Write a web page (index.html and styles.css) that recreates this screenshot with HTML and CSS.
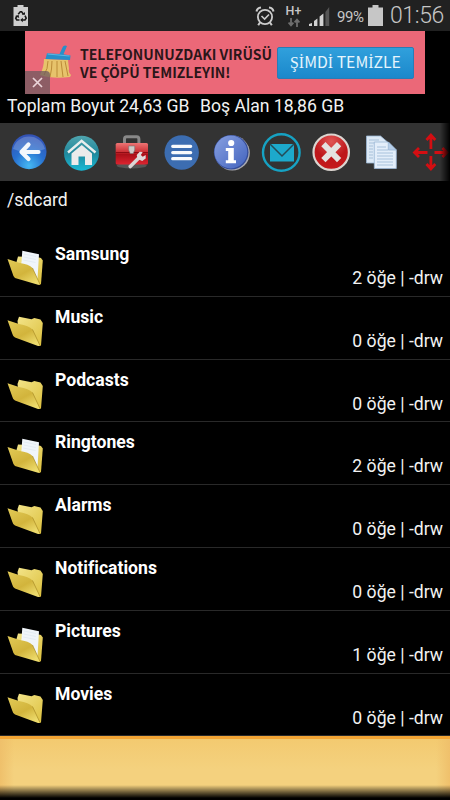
FILE: index.html
```html
<!DOCTYPE html>
<html lang="tr">
<head>
  <meta charset="UTF-8">
  <meta name="viewport" content="width=device-width, initial-scale=1.0">
  <title>/sdcard</title>
  <link rel="stylesheet" href="styles.css">
</head>
<body>
  <!-- shared folder icons -->
  <svg class="defs" width="0" height="0">
    <defs>
      <linearGradient id="gFront" x1="0" y1="0" x2="0.7" y2="1">
        <stop offset="0" stop-color="#e2cb57"/>
        <stop offset="0.6" stop-color="#d2b43c"/>
        <stop offset="1" stop-color="#eddb6c"/>
      </linearGradient>
      <linearGradient id="gBack" x1="0" y1="0" x2="1" y2="1">
        <stop offset="0" stop-color="#f3e489"/>
        <stop offset="1" stop-color="#dcc03e"/>
      </linearGradient>
      <symbol id="folder" viewBox="0 0 40 40">
        <path d="M12.5 10 L14 5.8 L26.5 8.3 L29.3 7 L35.5 8.6 L37.8 12 L36 34.5 L34 35 L14 22Z" fill="url(#gBack)"/>
        <path d="M2.5 9.2 L14 13 Q24 14.5 27.5 18.5 L35.2 35 L33 35 L10 26.5 Q8 25.5 7.4 23Z" fill="url(#gFront)"/>
        <path d="M27.5 18.5 L35.2 35" stroke="#a98b24" stroke-width="0.7" fill="none"/>
      </symbol>
      <symbol id="folder-full" viewBox="0 0 40 40">
        <path d="M11.5 14 L13 8.5 L34 9.5 L36 10 L37.8 12.5 L36 36 L34 36.7 L14 24Z" fill="url(#gBack)"/>
        <path d="M17.3 2.8 L34 6.2 L32.5 31 L14 23 L16.5 14Z" fill="#f0f5fa"/>
        <path d="M19 6 L31 8.5 M18.6 9 L30.8 11.5 M18.3 12 L30.5 14.5" stroke="#dae5ef" stroke-width="0.6"/>
        <path d="M2.5 11 L14 14.8 Q24 16.3 27.5 20 L35.2 36.8 L33 36.8 L10 30 Q8 28 7.4 25Z" fill="url(#gFront)"/>
        <path d="M27.5 20 L35.2 36.8" stroke="#a98b24" stroke-width="0.7" fill="none"/>
      </symbol>
    </defs>
  </svg>

  <div class="screen">
    <header class="statusbar">
      <svg class="recycle" width="16" height="22" viewBox="0 0 16 22">
        <path d="M4.5 0h6v2H15v19H.5V2h4z" fill="#cfcfcf"/>
        <path d="M5.2 9.2 L7.3 6.8 H8.6 L10.5 9.2 M12 10.7 L13.2 13.2 L12 15 H9.2 M6.5 15 H3.8 L2.7 13.2 L4 11" fill="none" stroke="#181818" stroke-width="1.6"/>
        <path d="M8.8 9.7h3.2V6.9zM9.8 12.8v4.4L7.2 15zM2 11l3.6-1 .6 3z" fill="#181818"/>
      </svg>
      <span class="spacer"></span>
      <svg class="alarm" width="20" height="22" viewBox="0 0 20 22" fill="none" stroke="#ccc">
        <circle cx="10" cy="12" r="7.1" stroke-width="1.8"/>
        <path d="M6.5 11 L9.6 14 L14 9.5" stroke-width="1.6"/>
        <path d="M1.5 6.5 Q2 3 6 2.5 M18.5 6.5 Q18 3 14 2.5 M5 17.5 L3.2 20.3 M15 17.5 L16.8 20.3" stroke-width="2"/>
      </svg>
      <div class="network">
        <span>H+</span>
        <svg width="12" height="9" viewBox="0 0 12 9" fill="none" stroke="#6e6e6e" stroke-width="1.8">
          <path d="M3 0v7M.6 4.6L3 7.4l2.4-2.8M9 9V2M6.6 4.4L9 1.6l2.4 2.8"/>
        </svg>
      </div>
      <svg class="signal" width="21" height="20" viewBox="0 0 21 20">
        <path d="M0 20v-2l3-1v3zM5 20v-5l3.4-2.5V20zM10.6 20V10.5L14.4 7.5V20z" fill="#d2d2d2"/>
        <path d="M16.4 6L20.2 1v19h-3.8z" fill="#555"/>
      </svg>
      <span class="percent">99%</span>
      <svg class="battery" width="15" height="21" viewBox="0 0 15 21">
        <path d="M4.5 0h6v2.5H15V21H0V2.5h4.5z" fill="#c6c6c6"/>
      </svg>
      <span class="clock">01:56</span>
    </header>

    <section class="ad">
      <svg class="broom" width="34" height="36" viewBox="0 0 34 36">
        <path d="M5 14 Q5 22 1 30 Q13 34 31 32 L32 30 Q29 27 30 24 L29 15Z" fill="#e7c36b"/>
        <path d="M9 16 Q9 24 5 30 M13 16 Q13 24 11 32 M18 16 L18 32 M22 16 L24 32 M26 16 L29 31" stroke="#bb8b38" stroke-width="1" fill="none"/>
        <path d="M20.5 9 L24 1.5 Q26 -.4 28 1 L24.5 9.3 L31.5 10.5 L31 15 L6.5 14 L8 8.3Z" fill="#278fc9"/>
        <path d="M8.5 9 L30.5 11" stroke="#5bb8e4" stroke-width="1"/>
      </svg>
      <p class="ad-text">TELEFONUNUZDAKI VIRÜSÜ<br>VE ÇÖPÜ TEMIZLEYIN!</p>
      <button class="ad-button" type="button"><span class="serif">Şİ</span>MD<span class="serif">İ</span> TEM<span class="serif">İ</span>ZLE</button>
      <span class="ad-close">
        <svg width="11" height="11" viewBox="0 0 11 11"><path d="M1 1l9 9M10 1l-9 9" stroke="#ecd5d9" stroke-width="1.7"/></svg>
      </span>
    </section>

    <div class="storage">
      <span class="total">Toplam Boyut 24,63 GB</span>
      <span class="free">Boş Alan 18,86 GB</span>
    </div>

    <nav class="toolbar">
      <svg viewBox="0 0 50 50">
        <defs>
          <radialGradient id="gBlue" cx="0.5" cy="0.9" r="0.9">
            <stop offset="0" stop-color="#45b9f3"/>
            <stop offset="0.5" stop-color="#2870d0"/>
            <stop offset="1" stop-color="#3450b2"/>
          </radialGradient>
        </defs>
        <circle cx="25" cy="24.7" r="17.5" fill="url(#gBlue)"/>
        <path d="M9 22 A16.5 16.5 0 0 1 41 22 Q25 29 9 22Z" fill="#fff" opacity="0.2"/>
        <path d="M24.5 17.5 L17.5 25 L24.5 32 M18 25 H34.5" fill="none" stroke="#f4f7fc" stroke-width="4.2" stroke-linecap="round" stroke-linejoin="round"/>
      </svg>
      <svg viewBox="0 0 50 50">
        <defs>
          <linearGradient id="gTeal" x1="0" y1="0" x2="0" y2="1">
            <stop offset="0" stop-color="#4fa4ae"/>
            <stop offset="0.5" stop-color="#20889c"/>
            <stop offset="1" stop-color="#18b9d5"/>
          </linearGradient>
        </defs>
        <circle cx="27.5" cy="26.2" r="17.5" fill="url(#gTeal)"/>
        <path d="M27.8 18 L38 26.5 V38 H31 V29.5 H24.5 V38 H17.5 V26.5Z" fill="#ebebeb"/>
        <path d="M14 25.5 L27.6 13.8 L41.5 25.5" fill="none" stroke="#e8eeee" stroke-width="2.4"/>
      </svg>
      <svg viewBox="0 0 50 50">
        <defs>
          <linearGradient id="gBox" x1="0" y1="0" x2="0" y2="1">
            <stop offset="0" stop-color="#ed7474"/>
            <stop offset="0.45" stop-color="#c92b30"/>
            <stop offset="0.52" stop-color="#a90f18"/>
            <stop offset="1" stop-color="#dc2430"/>
          </linearGradient>
        </defs>
        <g transform="translate(2.7 0)">
          <ellipse cx="25" cy="38.5" rx="15" ry="3" fill="#555"/>
          <path d="M17.8 16 V12 Q17.8 9.7 20 9.7 H30 Q32.2 9.7 32.2 12 V16" fill="none" stroke="#888" stroke-width="3"/>
          <rect x="9" y="16" width="32.3" height="21.5" rx="1.5" fill="url(#gBox)"/>
          <path d="M9 25.5h32.3" stroke="#8d0c14"/>
          <path d="M22 19h6v4l-1.5 3.5h-3L22 23z" fill="#cfcac8" stroke="#777" stroke-width=".6"/>
          <path d="M23.5 39.5 L32 31" stroke="#dad5d5" stroke-width="3.6" stroke-linecap="round"/>
          <path d="M31 32 L30 28 L33 24.8 L36 25 L34.2 28 L36 29.8 L39 28 L39 31.5 L35.5 34Z" fill="#dedada"/>
        </g>
      </svg>
      <svg viewBox="0 0 50 50">
        <circle cx="27.7" cy="25.5" r="17.2" fill="#3c6db1"/>
        <path d="M18.7 19.3h18M18.7 25.6h18M18.7 31.7h18" stroke="#f8fafc" stroke-width="3.2" stroke-linecap="round"/>
      </svg>
      <svg viewBox="0 0 50 50">
        <defs>
          <linearGradient id="gInfo" x1="0" y1="0" x2="1" y2="1">
            <stop offset="0" stop-color="#88a0e1"/>
            <stop offset="1" stop-color="#4263be"/>
          </linearGradient>
        </defs>
        <circle cx="28.3" cy="26" r="17.5" fill="#a9a9af"/>
        <circle cx="27.2" cy="25.2" r="17.3" fill="#344c98"/>
        <circle cx="26.8" cy="25" r="16.4" fill="url(#gInfo)"/>
        <circle cx="27.2" cy="16" r="3.1" fill="#fff"/>
        <path d="M21.8 21h8v12.3H32v3H21.8v-3h2.4V24h-2.4z" fill="#fff"/>
      </svg>
      <svg viewBox="0 0 50 50">
        <circle cx="27.3" cy="25.5" r="18.3" fill="none" stroke="#16a2c3" stroke-width="2.4"/>
        <rect x="16" y="17" width="24" height="17.5" fill="#1da9cc"/>
        <path d="M16 17 L28 29 L40 17" fill="none" stroke="#244b57" stroke-width="1.5"/>
      </svg>
      <svg viewBox="0 0 50 50">
        <defs>
          <radialGradient id="gRed" cx="0.5" cy="0.2" r="0.8">
            <stop offset="0" stop-color="#e05554"/>
            <stop offset="0.6" stop-color="#bd171a"/>
            <stop offset="1" stop-color="#c71a1c"/>
          </radialGradient>
        </defs>
        <circle cx="27.2" cy="25.2" r="17.7" fill="url(#gRed)" stroke="#dbd5d0" stroke-width="2.2"/>
        <path d="M21.5 19.3 L33 31 M33 19.3 L21.5 31" stroke="#e4e2e0" stroke-width="6" stroke-linecap="square" stroke-linejoin="round"/>
      </svg>
      <svg viewBox="0 0 50 50">
        <g stroke="#9bb6d4" stroke-width="0.8">
          <path d="M12.5 9h14l7 6v21h-21z" fill="#dce9f6"/>
          <path d="M20.3 15h14l8 8v18.5h-22z" fill="#e3eefa"/>
          <path d="M15 13h10M15 16h5M15 19h4M15 22h4M15 25h4M15 28h4M15 31h4M23 20h9M23 23h11M23 26h16M23 29h16M23 32h16M23 35h16M23 38h16"/>
          <path d="M34.3 15v8h8z" fill="#b6cee9"/>
        </g>
      </svg>
      <svg viewBox="0 0 50 50">
        <path d="M26.9 22v-12M22.5 13l4.4-5 4.4 5M26.9 29v13M22.5 37l4.4 5 4.4-5M23.5 25.5H10.5M15 21l-4.5 4.5L15 30M30.5 25.5H43M38.5 21l4.5 4.5-4.5 4.5" fill="none" stroke="#d40e12" stroke-width="2.8"/>
      </svg>
    </nav>

    <div class="path">/sdcard</div>

    <ul class="files">
      <li><svg class="icon"><use href="#folder-full"/></svg><span class="name">Samsung</span><span class="meta">2 öğe | -drw</span></li>
      <li><svg class="icon"><use href="#folder"/></svg><span class="name">Music</span><span class="meta">0 öğe | -drw</span></li>
      <li><svg class="icon"><use href="#folder"/></svg><span class="name">Podcasts</span><span class="meta">0 öğe | -drw</span></li>
      <li><svg class="icon"><use href="#folder-full"/></svg><span class="name">Ringtones</span><span class="meta">2 öğe | -drw</span></li>
      <li><svg class="icon"><use href="#folder"/></svg><span class="name">Alarms</span><span class="meta">0 öğe | -drw</span></li>
      <li><svg class="icon"><use href="#folder"/></svg><span class="name">Notifications</span><span class="meta">0 öğe | -drw</span></li>
      <li><svg class="icon"><use href="#folder-full"/></svg><span class="name">Pictures</span><span class="meta">1 öğe | -drw</span></li>
      <li><svg class="icon"><use href="#folder"/></svg><span class="name">Movies</span><span class="meta">0 öğe | -drw</span></li>
    </ul>

    <div class="selected"></div>
  </div>
</body>
</html>
```

FILE: styles.css
```css
* {
  box-sizing: border-box;
}

body {
  margin: 0;
  background: #000;
  color: #f2f2f2;
  font-family: Roboto, "Noto Sans", sans-serif;
}

.defs {
  position: absolute;
}

.screen {
  width: 450px;
  height: 800px;
  overflow: hidden;
  display: flex;
  flex-direction: column;
}

/* status bar */
.statusbar {
  flex: none;
  height: 31px;
  padding: 0 7px 0 13px;
  display: flex;
  align-items: center;
  background: #212121;
  color: #c6c6c6;
}

.spacer {
  flex: 1;
}

.alarm {
  margin-right: 10px;
}

.network {
  width: 17px;
  margin-right: 7px;
  display: flex;
  flex-direction: column;
  align-items: center;
  font-size: 12.5px;
  font-weight: 500;
  line-height: 11px;
}

.network svg {
  margin-top: 2px;
}

.signal {
  margin: 1px 7px 0 0;
}

.percent {
  width: 28px;
  margin: 2px 3px 0 0;
  font-size: 15px;
  letter-spacing: -0.4px;
  white-space: nowrap;
}

.battery {
  margin-right: 7px;
}

.clock {
  width: 53px;
  font-size: 23px;
  font-weight: 300;
  line-height: 31px;
  letter-spacing: -0.4px;
  white-space: nowrap;
}

/* banner */
.ad {
  position: relative;
  flex: none;
  width: 400px;
  height: 63px;
  margin: 0 25px;
  padding-left: 14px;
  display: flex;
  align-items: center;
  background: #eb6878;
}

.ad-text {
  width: 197px;
  margin: 0 0 0 7px;
  color: #2b1619;
  font-family: "Noto Sans CJK SC", "Noto Sans", sans-serif;
  font-size: 14px;
  font-weight: 700;
  line-height: 18px;
  white-space: nowrap;
}

.ad-button {
  width: 137px;
  height: 32px;
  padding: 0;
  border: 1px solid #2a7cb5;
  border-radius: 2px;
  background: linear-gradient(#30a0dc, #1b88cb);
  color: #e5f5fd;
  font-family: "Noto Sans CJK SC", "Noto Sans", sans-serif;
  font-size: 15.8px;
  line-height: 28px;
  white-space: nowrap;
}

.serif {
  font-family: "Liberation Serif", serif;
}

.ad-close {
  position: absolute;
  left: 0;
  bottom: 0;
  width: 25px;
  height: 23px;
  display: flex;
  align-items: center;
  justify-content: center;
  border-top-right-radius: 4px;
  background: rgba(110, 90, 95, 0.75);
}

.storage {
  flex: none;
  height: 29px;
  padding: 0 0 6px 7px;
  display: flex;
  align-items: center;
  font-size: 17.6px;
  white-space: pre;
}

.total {
  width: 193px;
}

/* toolbar */
.toolbar {
  flex: none;
  height: 58px;
  padding: 4px 0 0 4px;
  display: flex;
  overflow: hidden;
  background: #333;
  -webkit-mask-image: linear-gradient(90deg, #000 440px, transparent 450px);
  mask-image: linear-gradient(90deg, #000 440px, transparent 450px);
}

.toolbar svg {
  flex: none;
  width: 50px;
  height: 50px;
}

.path {
  flex: none;
  height: 53px;
  padding: 9px 7px 0;
  font-size: 17.6px;
  line-height: 21px;
}

/* file list */
.files {
  flex: none;
  margin: 0;
  padding: 0;
  list-style: none;
}

.files li {
  height: 62.8px;
  padding: 0 7px 0 5px;
  display: grid;
  grid-template-columns: 50px 1fr;
  grid-template-rows: 32px 30px;
  border-bottom: 1px solid #292929;
}

.icon {
  grid-row: 1 / 3;
  width: 40px;
  height: 40px;
  margin-top: 14px;
}

.name {
  padding-top: 10px;
  color: #fff;
  font-size: 17.6px;
  font-weight: 700;
  line-height: 21px;
}

.meta {
  grid-column: 2;
  justify-self: end;
  font-size: 17.6px;
  line-height: 25px;
}

.selected {
  flex: 1;
  border-top: 3px solid #f3a535;
  background:
    linear-gradient(transparent 46px, rgba(0, 0, 0, 0.55) 53px, #000 59px),
    linear-gradient(90deg, #efc06b, transparent 14px, transparent 436px, #efc06b),
    linear-gradient(#f3ca70, #f4d17e 30px);
}
```
